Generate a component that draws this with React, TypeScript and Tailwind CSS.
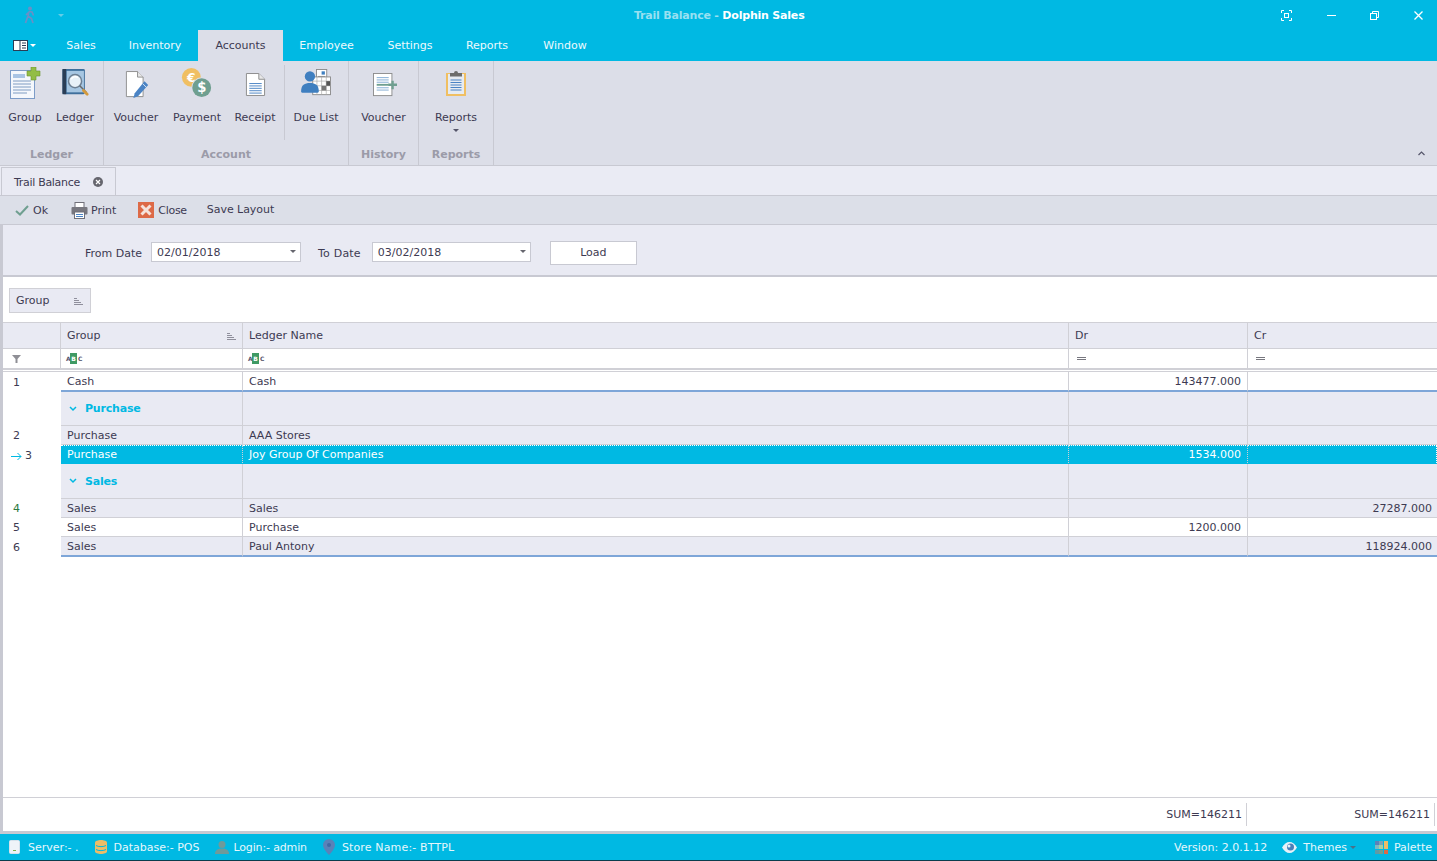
import type { ReactNode } from 'react'

const cols = 'grid grid-cols-[58px_182px_826px_179px_1fr]'

function Caret({ className = 'border-t-[#e8f6fb]' }: { className?: string }) {
  return <span className={`inline-block h-0 w-0 border-x-[3px] border-t-[3px] border-x-transparent ${className}`} />
}

/* ================= RIBBON ICONS ================= */
function GroupIcon() {
  return (
    <svg width="32" height="32" viewBox="0 0 32 32" className="ml-[2px]">
      <rect x="0.5" y="3.5" width="24" height="28" fill="#f4f7fc" stroke="#7d9cc8" />
      <rect x="3" y="7" width="12" height="4" fill="#a9c4e4" />
      <path d="M3 14h18M3 17h18M3 20h18M3 23h18M3 26h14" stroke="#7f9cc2" />
      <path d="M21 0h5v4h4v5h-4v4h-5V9h-4V4h4z" fill="#93bd45" stroke="#6b9430" strokeWidth="0.6" />
    </svg>
  )
}

function LedgerIcon() {
  return (
    <svg width="28" height="30" viewBox="0 0 30 32" className="ml-[2px]">
      <rect x="0.5" y="1" width="24" height="27" rx="1.5" fill="#3f6f9c" />
      <rect x="0.5" y="1" width="4" height="27" fill="#2a3d55" />
      <rect x="5" y="3" width="18.5" height="23" fill="#a6c6e2" />
      <circle cx="14" cy="14" r="7" fill="#e8f1f8" stroke="#6c7f93" strokeWidth="1.6" />
      <path d="M10 12a5 5 0 0 1 7-2" stroke="#ffffff" strokeWidth="1.5" fill="none" />
      <path d="M19 19l7 7" stroke="#6a6a6a" strokeWidth="1.6" />
      <path d="M23 24l4 4" stroke="#d49a3c" strokeWidth="3" strokeLinecap="round" />
    </svg>
  )
}

function VoucherIcon() {
  return (
    <svg width="26" height="30" viewBox="0 0 28 32" className="ml-[3px] mt-[3px]">
      <path d="M1.5 1.5h12l6 6v21h-18z" fill="#ffffff" stroke="#8b8b8b" />
      <path d="M13.5 1.5v6h6" fill="#e8e8e8" stroke="#8b8b8b" />
      <path d="M21 12l4 4-11 12-5 2 1.5-5z" fill="#4a83c4" />
      <path d="M19 14.5l4 4" stroke="#dce8f5" />
    </svg>
  )
}

function PaymentIcon() {
  return (
    <svg width="32" height="32" viewBox="0 0 34 34">
      <circle cx="11" cy="11" r="10" fill="#f0bf62" />
      <text x="11" y="15.5" textAnchor="middle" fontSize="13" fontWeight="700" fill="#ffffff" fontFamily="'DejaVu Sans', sans-serif">€</text>
      <circle cx="22" cy="22" r="11" fill="#dcdee8" />
      <circle cx="22" cy="22" r="10" fill="#6f9f90" />
      <text x="22" y="27" textAnchor="middle" fontSize="14" fontWeight="700" fill="#ffffff" fontFamily="'DejaVu Sans', sans-serif">$</text>
    </svg>
  )
}

function ReceiptIcon() {
  return (
    <svg width="21" height="25" viewBox="0 0 22 26" className="mt-[2px]">
      <path d="M1.5 1.5h13l6 6v17h-19z" fill="#ffffff" stroke="#8b8b8b" />
      <path d="M14.5 1.5v6h6" fill="#e8e8e8" stroke="#8b8b8b" />
      <path d="M4.5 12h13M4.5 14.5h13M4.5 17h13M4.5 19.5h13M4.5 22h13" stroke="#4a83c4" />
    </svg>
  )
}

function DueListIcon() {
  return (
    <svg width="30" height="28" viewBox="0 0 32 30">
      <rect x="16.5" y="0.5" width="11" height="14" fill="#fff" stroke="#8b8b8b" />
      <rect x="22" y="2.5" width="3.5" height="3.5" fill="#3f7fc0" />
      <path d="M18 8h8M18 10h8" stroke="#8b8b8b" />
      <rect x="12.5" y="8.5" width="19" height="19" fill="#fff" stroke="#8b8b8b" />
      <path d="M12.5 13h19M12.5 18h19M12.5 23h19M17 8.5v19M22 8.5v19M27 8.5v19" stroke="#a9a9a9" strokeWidth="0.7" />
      <rect x="22" y="18" width="5" height="5" fill="#777" />
      <rect x="27" y="13" width="4" height="5" fill="#555" />
      <circle cx="9.5" cy="8" r="5.5" fill="#3f7fc0" />
      <path d="M0 24c0-7 4-9 9.5-9s9.5 2 9.5 9c0 1-1 1.5-2 1.5H2c-1 0-2-.5-2-1.5z" fill="#3f7fc0" />
    </svg>
  )
}

function HistoryIcon() {
  return (
    <svg width="24" height="24" viewBox="0 0 26 26" className="ml-[3px] mt-[3px]">
      <rect x="0.5" y="0.5" width="20" height="24" fill="#fff" stroke="#8b8b8b" />
      <path d="M4 5h13M4 7.5h13M4 10h13M4 16h13M4 18.5h13" stroke="#7fa9d3" />
      <path d="M4 12.8h13" stroke="#6f9f90" strokeWidth="2" />
      <path d="M20 8.5h2.5v3H26V14h-3.500v3.500H20V14h-3.500v-2.500H20z" fill="#6f9f90" />
    </svg>
  )
}

function ReportsIcon() {
  return (
    <svg width="20" height="26" viewBox="0 0 20 26">
      <rect x="0" y="3" width="20" height="23" fill="#f0bf62" />
      <rect x="2" y="4" width="16" height="20" fill="#e6ebf2" />
      <path d="M4 3h4a2 2 0 0 1 4 0h4v3.5H4z" fill="#6c6c6c" />
      <path d="M4.5 10h11M4.5 12.5h11M4.5 15h11M4.5 17.5h11M4.5 20h11" stroke="#4a83c4" />
    </svg>
  )
}

function RibbonButton({ icon, label, width, caret }: { icon: ReactNode; label: string; width: string; caret?: boolean }) {
  return (
    <div className={`flex flex-col items-center ${width}`}>
      <div className="flex h-[42px] items-center justify-center pt-[2px]">{icon}</div>
      <div className="mt-[8px] leading-[14px]">{label}</div>
      {caret && <div className="mt-[4px] flex"><Caret className="border-t-[#55556a]" /></div>}
    </div>
  )
}

function RibbonGroup({ label, width, children }: { label: string; width: string; children: ReactNode }) {
  return (
    <div className={`flex h-full shrink-0 flex-col border-r border-[#c8c9d2] ${width}`}>
      <div className="flex h-[81px]">{children}</div>
      <div className="flex flex-1 items-start justify-center pt-[5px] font-bold text-[#9b9ba8]">{label}</div>
    </div>
  )
}

/* ================= TOOLBAR ICONS ================= */
function PrintIcon() {
  return (
    <svg width="17" height="17" viewBox="0 0 17 17">
      <rect x="4" y="0.5" width="9" height="5" fill="#fff" stroke="#6f6f78" />
      <rect x="0.5" y="5" width="16" height="7.5" rx="1" fill="#77777f" />
      <rect x="3.5" y="10" width="10" height="6.5" fill="#fff" stroke="#6f6f78" />
      <path d="M5 12.5h7M5 14.5h7" stroke="#4a83c4" />
    </svg>
  )
}

function CloseIcon() {
  return (
    <svg width="16" height="16" viewBox="0 0 16 16">
      <rect width="16" height="16" fill="#dd6a47" />
      <path d="M3.5 3.5l9 9M12.5 3.5l-9 9" stroke="#f5e3dc" strokeWidth="3" />
    </svg>
  )
}

function SortIcon() {
  return (
    <svg width="9" height="8" viewBox="0 0 9 8">
      <path d="M0 0.5h3M0 2.5h5M0 4.5h7M0 6.5h9" stroke="#8f8f9c" />
    </svg>
  )
}

function AbcIcon() {
  return (
    <div className="flex h-[11px] items-center text-[6px] leading-none font-bold text-[#55556a]">
      <span className="w-[4px]">A</span>
      <span className="flex h-[11px] w-[7px] items-center justify-center bg-[#3f9a64] text-white">B</span>
      <span className="ml-[1px] w-[4px]">C</span>
    </div>
  )
}

/* ================= GRID ================= */
type RowData = { n: string; group: string; ledger: string; dr?: string; cr?: string }

function IndexCell({ n, arrow, green }: { n: string; arrow?: boolean; green?: boolean }) {
  return (
    <div className={`flex items-center justify-start pl-[10px] pt-[2px] ${green ? 'text-[#2d7a3f]' : ''}`}>
      {arrow && (
        <svg width="11" height="9" viewBox="0 0 11 9" className="mr-[3px] ml-[-2px]">
          <path d="M0 4.5h10M6.5 1l3.5 3.5L6.5 8" stroke="#00b9e3" fill="none" />
        </svg>
      )}
      {n}
    </div>
  )
}

function DataRow({ row, height, fill, line }: { row: RowData; height: string; fill: string; line: string }) {
  const cell = `flex items-center overflow-hidden border-r border-[#d0d0d6] px-[6px] pt-[2px] ${line} ${fill}`
  return (
    <div className={`${cols} ${height}`}>
      <IndexCell n={row.n} green={row.n === '4'} />
      <div className={cell}>{row.group}</div>
      <div className={cell}>{row.ledger}</div>
      <div className={`${cell} justify-end`}>{row.dr}</div>
      <div className={`${cell} justify-end border-r-0 pr-[5px]`}>{row.cr}</div>
    </div>
  )
}

function SelectedRow({ row }: { row: RowData }) {
  const cell = 'h-full border-b border-[#7ea6d8] bg-[#00b9e3] text-white'
  const inner = 'flex h-full items-center border-y border-dotted border-white px-[6px] pt-[1px]'
  return (
    <div className={`${cols} h-[19px]`}>
      <IndexCell n={row.n} arrow />
      <div className={cell}><div className={`${inner} border-r border-r-[#d0d0d6]`}>{row.group}</div></div>
      <div className={cell}><div className={`${inner} border-r border-r-[#d0d0d6]`}>{row.ledger}</div></div>
      <div className={cell}><div className={`${inner} justify-end border-r border-r-[#d0d0d6]`}>{row.dr}</div></div>
      <div className={cell}><div className={`${inner} border-r border-r-white`}></div></div>
    </div>
  )
}

function GroupRow({ label, height }: { label: string; height: string }) {
  const cell = 'border-r border-b border-[#d0d0d6] bg-[#e9eaf3]'
  return (
    <div className={`${cols} ${height}`}>
      <div />
      <div className={`${cell} flex items-center pl-[8px] font-bold tracking-[-0.2px] text-[#00b9e3]`}>
        <svg width="8" height="6" viewBox="0 0 8 6" className="mr-[8px]">
          <path d="M1 1l3 3 3-3" stroke="#00b9e3" strokeWidth="1.5" fill="none" />
        </svg>
        <span className="pt-[2px]">{label}</span>
      </div>
      <div className={cell} />
      <div className={cell} />
      <div className={`${cell} border-r-0`} />
    </div>
  )
}

const menuTabs = [
  { label: 'Sales', width: 'w-[62px]' },
  { label: 'Inventory', width: 'w-[86px]' },
  { label: 'Accounts', width: 'w-[85px]' },
  { label: 'Employee', width: 'w-[87px]' },
  { label: 'Settings', width: 'w-[80px]' },
  { label: 'Reports', width: 'w-[74px]' },
  { label: 'Window', width: 'w-[82px]' },
]

const grey = 'bg-[#e9eaf3]'
const white = 'bg-white'
const thin = 'border-b border-b-[#d0d0d6]'
const blue = 'border-b-2 border-b-[#7ea6d8]'

export default function App() {
  return (
    <div className="flex h-[861px] w-[1437px] flex-col overflow-hidden bg-white font-['DejaVu_Sans',sans-serif] text-[11px] text-[#3d3a52]">
      {/* TITLE BAR */}
      <div className="flex h-[30px] shrink-0 items-center bg-[#00b9e3] text-[#e6f7fc]">
        <svg width="14" height="18" viewBox="0 0 14 18" className="ml-[23px]">
          <circle cx="7" cy="2.5" r="2" fill="#6a8fc6" />
          <path d="M6 5.5l3 .5 1.5 3.5M6 5.5L5 10l-2.5 7M5 10l3.5 2.5L10 17M6 6L3 9" stroke="#6a8fc6" strokeWidth="1.7" fill="none" />
        </svg>
        <div className="ml-[21px] flex"><Caret className="border-t-[#64cde8]" /></div>
        <div className="flex-1 pl-[570px] pt-[3px] font-bold tracking-[-0.2px] text-[#98e0f1]">
          Trail Balance - <span className="text-white">Dolphin Sales</span>
        </div>
        <svg width="11" height="11" viewBox="0 0 11 11" className="mr-[35px]">
          <path d="M0.5 3V0.5H3M8 0.5h2.5V3M10.5 8v2.5H8M3 10.5H0.5V8" stroke="#fff" fill="none" />
          <rect x="3.5" y="3.5" width="4" height="4" stroke="#fff" fill="none" />
        </svg>
        <div className="mr-[34px] h-[1px] w-[9px] bg-white" />
        <svg width="9" height="9" viewBox="0 0 9 9" className="mr-[35px]">
          <rect x="0.5" y="2.5" width="6" height="6" stroke="#fff" fill="none" />
          <path d="M2.5 2.5v-2h6v6h-2" stroke="#fff" fill="none" />
        </svg>
        <svg width="9" height="9" viewBox="0 0 9 9" className="mr-[14px]">
          <path d="M0.5 0.5l8 8M8.5 0.5l-8 8" stroke="#fff" strokeWidth="1.3" />
        </svg>
      </div>

      {/* MENU TABS */}
      <div className="flex h-[31px] shrink-0 items-stretch bg-[#00b9e3] text-[#eefafd]">
        <div className="flex w-[50px] items-center pb-[1px] pl-[13px]">
          <svg width="15" height="11" viewBox="0 0 15 11">
            <rect x="0.5" y="0.5" width="14" height="10" fill="#fff" stroke="#2a3d55" />
            <path d="M7 0.5v10" stroke="#2a3d55" />
            <path d="M9 3h4M9 5.5h4M9 8h4" stroke="#2a3d55" />
          </svg>
          <div className="ml-[2px] flex"><Caret className="border-t-white" /></div>
        </div>
        {menuTabs.map(t => (
          <div
            key={t.label}
            className={`flex items-center justify-center pt-[2px] ${t.width} ${t.label === 'Accounts' ? 'bg-[#dcdee8] text-[#3d3a52]' : ''}`}
          >
            {t.label}
          </div>
        ))}
      </div>

      {/* RIBBON */}
      <div className="flex h-[105px] shrink-0 border-b border-[#c8c9d2] bg-[#dcdee8]">
        <RibbonGroup label="Ledger" width="w-[104px]">
          <RibbonButton icon={<GroupIcon />} label="Group" width="w-[50px]" />
          <RibbonButton icon={<LedgerIcon />} label="Ledger" width="w-[50px]" />
        </RibbonGroup>
        <RibbonGroup label="Account" width="w-[245px]">
          <RibbonButton icon={<VoucherIcon />} label="Voucher" width="w-[64px]" />
          <RibbonButton icon={<PaymentIcon />} label="Payment" width="w-[58px]" />
          <RibbonButton icon={<ReceiptIcon />} label="Receipt" width="w-[58px]" />
          <div className="mt-[4px] h-[75px] w-[1px] bg-[#c8c9d2]" />
          <RibbonButton icon={<DueListIcon />} label="Due List" width="w-[62px]" />
        </RibbonGroup>
        <RibbonGroup label="History" width="w-[70px]">
          <RibbonButton icon={<HistoryIcon />} label="Voucher" width="w-[69px]" />
        </RibbonGroup>
        <RibbonGroup label="Reports" width="w-[75px]">
          <RibbonButton icon={<ReportsIcon />} label="Reports" width="w-[74px]" caret />
        </RibbonGroup>
        <div className="flex flex-1 items-end justify-end pb-[9px] pr-[12px]">
          <svg width="7" height="5" viewBox="0 0 7 5">
            <path d="M0.5 4l3-3 3 3" stroke="#55556a" strokeWidth="1.2" fill="none" />
          </svg>
        </div>
      </div>

      {/* DOC TAB */}
      <div className="flex h-[30px] shrink-0 items-end border-b border-[#c8c9d2] bg-[#eaebf4] pl-[1px]">
        <div className="flex h-[28px] w-[115px] items-center border-x border-t border-[#c8c9d2] bg-[#e9eaf3] pl-[12px]">
          <span className="pt-[3px] tracking-[-0.3px]">Trail Balance</span>
          <svg width="10" height="10" viewBox="0 0 10 10" className="ml-[13px]">
            <circle cx="5" cy="5" r="5" fill="#66666e" />
            <path d="M3 3l4 4M7 3l-4 4" stroke="#fff" strokeWidth="1.2" />
          </svg>
        </div>
      </div>

      {/* TOOLBAR */}
      <div className="flex h-[29px] shrink-0 items-center border-b border-[#c8c9d2] bg-[#dcdfe8]">
        <svg width="14" height="11" viewBox="0 0 14 11" className="ml-[15px]">
          <path d="M1 6l4 3.5L13 1" stroke="#6f9f90" strokeWidth="2" fill="none" />
        </svg>
        <span className="ml-[4px] pt-[2px]">Ok</span>
        <div className="ml-[23px] flex"><PrintIcon /></div>
        <span className="ml-[3px] pt-[2px]">Print</span>
        <div className="ml-[22px] flex"><CloseIcon /></div>
        <span className="ml-[4px] pt-[2px] tracking-[-0.3px]">Close</span>
        <span className="ml-[20px] tracking-[-0.05px]">Save Layout</span>
      </div>

      <div className="flex min-h-0 flex-1 flex-col border-l-[3px] border-[#c8c9d2]">
        {/* FILTER */}
        <div className="flex h-[52px] shrink-0 items-center border-b-2 border-[#c8c9d2] bg-[#e9eaf3] pt-[3px]">
          <span className="ml-[82px] mt-[6px]">From Date</span>
          <div className="ml-[9px] flex h-[20px] w-[150px] items-center justify-between border border-[#c8c9d2] bg-white pl-[5px] pr-[4px]">
            <span className="pt-[4px]">02/01/2018</span>
            <Caret className="border-t-[#66666e]" />
          </div>
          <span className="ml-[17px] mt-[6px] tracking-[0.2px]">To Date</span>
          <div className="ml-[11px] flex h-[20px] w-[159px] items-center justify-between border border-[#c8c9d2] bg-white pl-[5px] pr-[4px]">
            <span className="pt-[4px]">03/02/2018</span>
            <Caret className="border-t-[#66666e]" />
          </div>
          <div className="ml-[19px] mt-[2px] flex h-[24px] w-[87px] items-center justify-center border border-[#c8c9d2] bg-white pt-[2px]">
            Load
          </div>
        </div>

        {/* GROUP PANEL */}
        <div className="flex h-[46px] shrink-0 items-start border-b border-[#d0d0d6] pl-[6px] pt-[11px]">
          <div className="flex h-[25px] w-[82px] items-center justify-between border border-[#d0d0d6] bg-[#e9eaf3] pl-[6px] pr-[7px] pt-[2px]">
            Group
            <SortIcon />
          </div>
        </div>

        {/* HEADER */}
        <div className={`${cols} h-[26px] shrink-0 border-b border-[#d0d0d6] bg-[#e9eaf3]`}>
          <div className="border-r border-[#d0d0d6]" />
          <div className="flex items-center justify-between border-r border-[#d0d0d6] px-[6px] pt-[2px]">
            Group
            <SortIcon />
          </div>
          <div className="flex items-center border-r border-[#d0d0d6] pl-[6px] pt-[2px]">Ledger Name</div>
          <div className="flex items-center border-r border-[#d0d0d6] pl-[6px] pt-[2px]">Dr</div>
          <div className="flex items-center pl-[6px] pt-[2px]">Cr</div>
        </div>

        {/* AUTO FILTER */}
        <div className={`${cols} h-[21px] shrink-0 border-b-2 border-[#d0d0d6]`}>
          <div className="flex items-center border-r border-[#d0d0d6] bg-white pl-[9px]">
            <svg width="9" height="8" viewBox="0 0 9 8">
              <path d="M0 0h9L5.5 4v4h-2V4z" fill="#8f8f95" />
            </svg>
          </div>
          <div className="flex items-center border-r border-[#d0d0d6] pl-[5px]"><AbcIcon /></div>
          <div className="flex items-center border-r border-[#d0d0d6] pl-[5px]"><AbcIcon /></div>
          <div className="flex items-center border-r border-[#d0d0d6] pl-[8px]"><div className="h-[3px] w-[9px] border-y border-[#77777f]" /></div>
          <div className="flex items-center pl-[8px]"><div className="h-[3px] w-[9px] border-y border-[#77777f]" /></div>
        </div>
        <div className="h-[2px] shrink-0 border-b border-[#d0d0d6]" />

        {/* ROWS */}
        <DataRow row={{ n: '1', group: 'Cash', ledger: 'Cash', dr: '143477.000' }} height="h-[20px]" fill={white} line={blue} />
        <GroupRow label="Purchase" height="h-[34px]" />
        <DataRow row={{ n: '2', group: 'Purchase', ledger: 'AAA Stores' }} height="h-[19px]" fill={grey} line={thin} />
        <SelectedRow row={{ n: '3', group: 'Purchase', ledger: 'Joy Group Of Companies', dr: '1534.000' }} />
        <GroupRow label="Sales" height="h-[35px]" />
        <DataRow row={{ n: '4', group: 'Sales', ledger: 'Sales', cr: '27287.000' }} height="h-[19px]" fill={grey} line={thin} />
        <DataRow row={{ n: '5', group: 'Sales', ledger: 'Purchase', dr: '1200.000' }} height="h-[19px]" fill={white} line={thin} />
        <DataRow row={{ n: '6', group: 'Sales', ledger: 'Paul Antony', cr: '118924.000' }} height="h-[20px]" fill={grey} line={blue} />

        <div className="flex-1" />

        {/* FOOTER */}
        <div className="flex h-[37px] shrink-0 items-center justify-end border-t border-b-[3px] border-t-[#d0d0d6] border-b-[#c8c9d2]">
          <div className="flex h-[23px] items-center border-r border-[#d0d0d6] pr-[4px] pt-[2px]">SUM=146211</div>
          <div className="flex h-[23px] w-[188px] items-center justify-end border-r border-[#d0d0d6] pr-[4px] pt-[2px]">SUM=146211</div>
          <div className="w-[2px]" />
        </div>
      </div>

      {/* STATUS BAR */}
      <div className="flex h-[27px] shrink-0 items-center border-b border-[#0a3d4d] bg-[#00b9e3] text-[#e6f7fc]">
        <svg width="11" height="14" viewBox="0 0 11 14" className="ml-[9px]">
          <rect x="0.5" y="0.5" width="10" height="13" rx="1" fill="#eef3f8" stroke="#d5e2ec" />
          <rect x="4" y="10" width="3" height="1" fill="#7fb04a" />
        </svg>
        <span className="ml-[8px] pt-[3px]">Server:- .</span>
        <svg width="12" height="14" viewBox="0 0 12 14" className="ml-[16px]">
          <path d="M0 2.5C0 1 3 0 6 0s6 1 6 2.5v9C12 13 9 14 6 14s-6-1-6-2.5z" fill="#ecbd68" />
          <path d="M1 5.5c2 1.5 8 1.5 10 0M1 9.5c2 1.5 8 1.5 10 0" stroke="#00b9e3" fill="none" />
        </svg>
        <span className="ml-[7px] pt-[3px]">Database:- POS</span>
        <svg width="14" height="13" viewBox="0 0 14 13" className="ml-[15px]">
          <circle cx="7" cy="3.5" r="3.5" fill="#6e9a9a" />
          <path d="M0 13c0-4 3-5.5 7-5.5S14 9 14 13z" fill="#6e9a9a" />
        </svg>
        <span className="ml-[5px] pt-[3px] tracking-[-0.15px]">Login:- admin</span>
        <svg width="12" height="16" viewBox="0 0 12 16" className="ml-[16px]">
          <path d="M6 0a6 6 0 0 1 6 6c0 4-6 10-6 10S0 10 0 6a6 6 0 0 1 6-6z" fill="#5a82b8" />
          <circle cx="6" cy="6" r="2" fill="#3f6aa5" />
        </svg>
        <span className="ml-[7px] pt-[3px] tracking-[0.15px]">Store Name:- BTTPL</span>
        <div className="flex-1" />
        <span className="pt-[3px]">Version: 2.0.1.12</span>
        <svg width="15" height="11" viewBox="0 0 15 11" className="ml-[15px]">
          <path d="M0 5.5C2 2 4.5 0 7.5 0S13 2 15 5.5C13 9 10.5 11 7.5 11S2 9 0 5.5z" fill="#e8f1f8" />
          <circle cx="8.5" cy="5" r="3.5" fill="#4a7fb8" />
          <circle cx="7" cy="4" r="1.5" fill="#e8f1f8" />
        </svg>
        <span className="ml-[6px] pt-[3px]">Themes</span>
        <div className="ml-[3px] flex"><Caret className="border-t-[#4a7088]" /></div>
        <div className="ml-[19px] grid grid-cols-[4px_4px_4px] gap-[0.5px]">
          <div className="h-[4px] w-[4px] bg-[#5a82b8]" />
          <div className="h-[4px] w-[4px] bg-[#7aa3b8]" />
          <div className="h-[4px] w-[4px] bg-[#ecbd68]" />
          <div className="h-[4px] w-[4px] bg-[#7fb8c0]" />
          <div className="h-[4px] w-[4px] bg-[#a8d0a0]" />
          <div className="h-[4px] w-[4px] bg-[#ecbd68]" />
          <div className="h-[4px] w-[4px] bg-[#5f9aa6]" />
          <div className="h-[4px] w-[4px] bg-[#6f9f90]" />
          <div className="h-[4px] w-[4px] bg-[#dd6a47]" />
        </div>
        <span className="ml-[6px] mr-[5px] pt-[3px]">Palette</span>
      </div>
    </div>
  )
}
